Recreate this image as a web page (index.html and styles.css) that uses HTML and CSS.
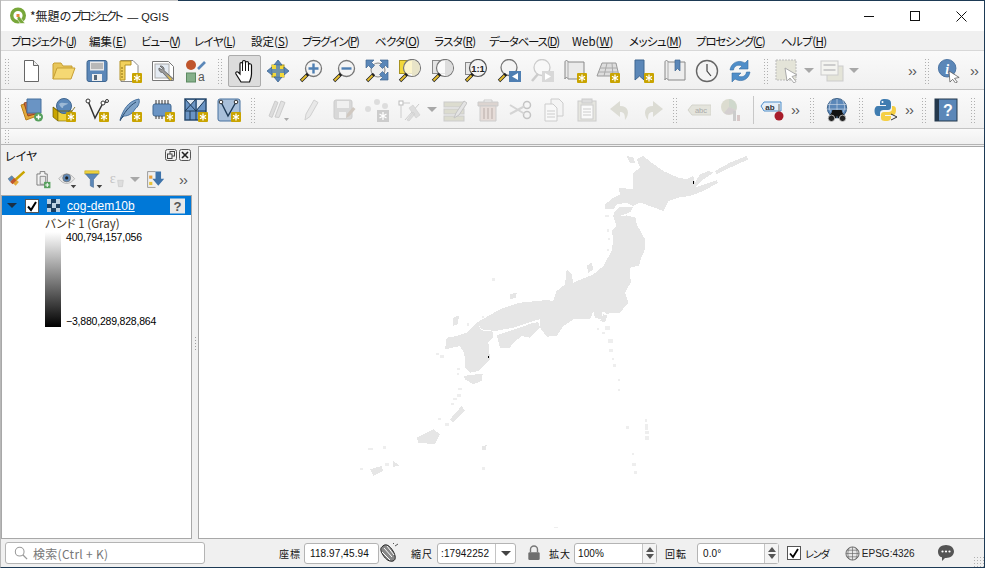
FILE: index.html
```html
<!DOCTYPE html>
<html lang="ja">
<head>
  <meta charset="UTF-8">
  <title>*無題のプロジェクト — QGIS</title>
  <link rel="stylesheet" href="styles.css">
</head>
<body>

<!-- icon sprite -->
<svg class="sprite" xmlns="http://www.w3.org/2000/svg">
  <symbol id="badge" viewBox="0 0 24 24">
    <rect x="14" y="14" width="10" height="10" rx="1" fill="#c9a400"/>
    <path d="M19 15.5v7M16 17.2l6 3.6M22 17.2l-6 3.6" stroke="#fff" stroke-width="1.3"/>
  </symbol>
  <symbol id="handle" viewBox="0 0 24 24">
    <path d="M9 15L2 22" stroke="#222" stroke-width="3.4"/>
    <path d="M7.5 16.5L2.5 21.5" stroke="#e8c030" stroke-width="1.8"/>
  </symbol>
  <symbol id="doc" viewBox="0 0 24 24">
    <path d="M5.5 1.5h9l5 5v16h-14z" fill="#fff" stroke="#666"/>
    <path d="M14.5 1.5v5h5" fill="#eee" stroke="#666"/>
  </symbol>
  <symbol id="folder" viewBox="0 0 24 24">
    <path d="M1 20V5l1-1h7l2 3h9v3" fill="#e8c65a" stroke="#c79f33"/>
    <path d="M1 20l4-11h18l-4 11z" fill="#f5d873" stroke="#c79f33"/>
  </symbol>
  <symbol id="save" viewBox="0 0 24 24">
    <rect x="2" y="1.5" width="20" height="21" rx="2" fill="#5b87b8" stroke="#3f6690"/>
    <rect x="5" y="2.5" width="14" height="9" fill="#e8e8e8"/>
    <path d="M6 5h12M6 7h12M6 9h12" stroke="#888"/>
    <rect x="7" y="15" width="10" height="7" fill="#eee"/><rect x="9" y="16" width="3" height="5" fill="#567"/>
  </symbol>
  <symbol id="layout" viewBox="0 0 24 24">
    <path d="M3 1.5h12l5 5v16H3z" fill="#fff" stroke="#888"/>
    <path d="M2 2h11v4H7v15H2z" fill="#f2d15c" stroke="#b59324"/>
    <path d="M3 9h2M3 12h2M3 15h2M3 18h2" stroke="#8a6f10"/>
    <use href="#badge"/>
  </symbol>
  <symbol id="manager" viewBox="0 0 24 24">
    <path d="M1.5 2.5h16l5 5v14h-21z" fill="#fff" stroke="#777"/>
    <rect x="4" y="5" width="14" height="14" fill="#e4ebf3" stroke="#aaa"/>
    <path d="M9 7a3.5 3.5 0 0 1 4 4.5l9 8-2.5 2.5-8-8.5A3.5 3.5 0 0 1 8 9l2.5 1.5 1-1z" fill="#9a9a9a" stroke="#555" stroke-width=".7"/>
    <path d="M15 15l6 5-1.5 1.5z" fill="#e2bd3e"/>
  </symbol>
  <symbol id="style" viewBox="0 0 24 24">
    <circle cx="7" cy="6" r="5" fill="#c0562d"/>
    <path d="M14 10l7-7" stroke="#5b87b8" stroke-width="2.6"/>
    <rect x="2.5" y="14" width="9" height="9" fill="#86b08a" stroke="#5d8a62"/>
    <text x="14" y="22" font-size="12" fill="#555" font-family="Liberation Sans">a</text>
  </symbol>
  <symbol id="pan" viewBox="0 0 24 24">
    <path d="M8 23l-5-8c-1-2 1-3 2.500-1.500L7 15V5c0-2 2.500-2 2.500 0V3c0-2 3-2 3 0v1c0-2 3-2 3 0v2c0-2 3-1.500 3 .5V15c0 3-1 5-2 8z" fill="#fff" stroke="#111" stroke-width="1.200"/>
    <path d="M9.500 5v7M12.500 4v8M15.500 5v7" stroke="#111"/>
  </symbol>
  <symbol id="panto" viewBox="0 0 24 24">
    <rect x="6" y="6" width="12" height="12" fill="#f2d83a" stroke="#a89320"/>
    <path d="M12 1l4 5h-8zM12 23l-4-5h8zM1 12l5-4v8zM23 12l-5 4V8z" fill="#5b87b8" stroke="#3f6690" stroke-width=".8"/>
    <path d="M10 6h4v12h-4zM6 10h12v4H6z" fill="#5b87b8" fill-opacity=".85"/>
    <path d="M6 6h4v4H6zM14 14h4v4h-4z" fill="#f2d83a"/>
  </symbol>
  <symbol id="zoomin" viewBox="0 0 24 24">
    <circle cx="14.500" cy="9.500" r="8" fill="#f4f4f4" stroke="#777" stroke-width="1.300"/>
    <path d="M9.500 9.500h10M14.500 4.500v10" stroke="#4f7fb2" stroke-width="2.400"/>
    <use href="#handle"/>
  </symbol>
  <symbol id="zoomout" viewBox="0 0 24 24">
    <circle cx="14.500" cy="9.500" r="8" fill="#f4f4f4" stroke="#777" stroke-width="1.300"/>
    <path d="M9.500 9.500h10" stroke="#4f7fb2" stroke-width="2.400"/>
    <use href="#handle"/>
  </symbol>
  <symbol id="zoomfull" viewBox="0 0 24 24">
    <circle cx="13" cy="11" r="7" fill="#eee" stroke="#888"/>
    <path d="M1 1h8l-2.500 2.500 3 3-3 3-3-3L1 9zM23 1v8l-2.500-2.500-3 3-3-3 3-3L15 1zM23 21h-8l2.500-2.500-3-3 3-3 3 3L23 13z" fill="#5b87b8" stroke="#3f6690" stroke-width=".7"/>
    <use href="#handle"/>
  </symbol>
  <symbol id="zoomsel" viewBox="0 0 24 24">
    <rect x="1.500" y="1.500" width="14" height="13" fill="#f2d83a" stroke="#a89320"/>
    <circle cx="14" cy="9" r="8.500" fill="#fff" fill-opacity=".75" stroke="#777" stroke-width="1.200"/>
    <path d="M14 1v16a8 8 0 0 0 0-16" fill="#e8e4c8"/>
    <use href="#handle"/>
  </symbol>
  <symbol id="zoomlayer" viewBox="0 0 24 24">
    <rect x="1.500" y="1.500" width="14" height="13" fill="#e4e4e4" stroke="#888"/>
    <circle cx="14" cy="9" r="8.500" fill="#fff" fill-opacity=".8" stroke="#777" stroke-width="1.200"/>
    <path d="M14 1v16a8 8 0 0 0 0-16" fill="#ddd"/>
    <use href="#handle"/>
  </symbol>
  <symbol id="zoom11" viewBox="0 0 24 24">
    <rect x="1.500" y="3.500" width="12" height="12" fill="#e8e8e8" stroke="#888"/>
    <circle cx="14" cy="9" r="8.500" fill="#f4f4f4" stroke="#555" stroke-width="1.200"/>
    <text x="14" y="12.500" font-size="9.500" font-weight="700" text-anchor="middle" fill="#222" font-family="Liberation Sans">1:1</text>
    <use href="#handle"/>
  </symbol>
  <symbol id="zoomlast" viewBox="0 0 24 24">
    <circle cx="12" cy="8.500" r="8" fill="#f4f4f4" stroke="#777" stroke-width="1.300"/>
    <use href="#handle"/>
    <rect x="12" y="12" width="12" height="11" fill="#4f7fb2"/>
    <path d="M21 14l-6 3.500 6 3.500z" fill="#fff"/>
  </symbol>
  <symbol id="zoomnext" viewBox="0 0 24 24">
    <circle cx="12" cy="8.500" r="8" fill="#f8f8f8" stroke="#ccc" stroke-width="1.300"/>
    <path d="M8 15l-6 7" stroke="#ccc" stroke-width="2.600"/>
    <rect x="12" y="12" width="12" height="11" fill="#d8d8d8"/>
    <path d="M15 14l6 3.500-6 3.500z" fill="#fff"/>
  </symbol>
  <symbol id="newmap" viewBox="0 0 24 24">
    <path d="M2 3c0-2 3-2 3 0h16v17H5c0-2-3-2-3 0z" fill="#eaeaea" stroke="#888"/>
    <path d="M5 3v17" stroke="#aaa"/>
    <use href="#badge"/>
  </symbol>
  <symbol id="map3d" viewBox="0 0 24 24">
    <path d="M6 4h14l3 13H1z" fill="#ddd" stroke="#999"/>
    <path d="M11 4L8 17M16 4l1 13M4 9h17M2 13h20" stroke="#aaa"/>
    <use href="#badge"/>
  </symbol>
  <symbol id="bookmark" viewBox="0 0 24 24">
    <path d="M5 1h9v20l-4.500-4L5 21z" fill="#5b87b8" stroke="#3f6690"/>
    <use href="#badge"/>
  </symbol>
  <symbol id="bookmarks" viewBox="0 0 24 24">
    <path d="M2 3c0-2 3-2 3 0h17v18H5c0-2-3-2-3 0z" fill="#eee" stroke="#888"/>
    <path d="M5 3v18" stroke="#aaa"/>
    <path d="M12 1h5v11l-2.500-2.500L12 12z" fill="#5b87b8" stroke="#3f6690" stroke-width=".7"/>
  </symbol>
  <symbol id="clock" viewBox="0 0 24 24">
    <circle cx="12" cy="12" r="10.500" fill="#f4f4f4" stroke="#666" stroke-width="1.400"/>
    <path d="M12 5v7l4 5" fill="none" stroke="#444" stroke-width="1.200"/>
  </symbol>
  <symbol id="refresh" viewBox="0 0 24 24">
    <path d="M2 11C3 4 10 0 17 4l3-3v9h-9l3-3C10 5 6 7 5.500 11z" fill="#4f8ec9" stroke="#3a6fa3" stroke-width=".6"/>
    <path d="M22 13c-1 7-8 11-15 7l-3 3v-9h9l-3 3c4 2 8 0 8.500-4z" fill="#4f8ec9" stroke="#3a6fa3" stroke-width=".6"/>
  </symbol>
  <symbol id="select" viewBox="0 0 24 24">
    <rect x="1" y="1" width="20" height="20" fill="#e4e4d8" stroke="#bbb" stroke-dasharray="2 1"/>
    <path d="M10 9l12 7-5 1.500 4 5-2 1.500-4-5-3 3z" fill="#fff" stroke="#aaa"/>
  </symbol>
  <symbol id="deselect" viewBox="0 0 24 24">
    <rect x="7" y="7" width="16" height="15" fill="#e4e4d8" stroke="#ccc"/>
    <rect x="1" y="2" width="17" height="14" fill="#f4f4f0" stroke="#ccc"/>
    <path d="M3.500 6h12M3.500 11h12" stroke="#ccc" stroke-width="2"/>
  </symbol>
  <symbol id="info" viewBox="0 0 26 26">
    <circle cx="11" cy="10" r="9.500" fill="#5b87b8" stroke="#46709e"/>
    <text x="11" y="16" font-size="15" font-style="italic" font-weight="700" text-anchor="middle" fill="#fff" font-family="Liberation Serif">i</text>
    <path d="M13 13l11 7-5 1 3 4-2 1-3-4-3 3z" fill="#fff" stroke="#555" stroke-width=".8"/>
  </symbol>
  <symbol id="addlayer" viewBox="0 0 24 24">
    <path d="M2 7l12-3 4 14-11 4z" fill="#e3a93a" stroke="#b8801c"/>
    <path d="M5 5l12-3 3 13-11 3z" fill="#c96a3c" stroke="#974a25"/>
    <path d="M8 1h14v14H8z" fill="#6a94c4" stroke="#46709e"/>
    <circle cx="19.500" cy="19" r="4.500" fill="#57a05d"/>
    <path d="M19.500 16.500v5M17 19h5" stroke="#fff" stroke-width="1.500"/>
  </symbol>
  <symbol id="gpkg" viewBox="0 0 24 24">
    <path d="M1 9l5 4v10l-5-4z" fill="#c9a400" stroke="#6b5a00" stroke-width=".7"/>
    <path d="M6 13h14v10H6z" fill="#efd23c" stroke="#8a7610" stroke-width=".7"/>
    <circle cx="12" cy="8" r="7.500" fill="#5b87b8" stroke="#3f6690"/>
    <path d="M7 6c3-3 6 0 9-1-1 3-5 1-5 5-2 0-3-2-4-4z" fill="#9db9d6"/>
    <path d="M1 9l5 4h14l3-4" fill="none" stroke="#6b5a00" stroke-width=".8"/>
    <use href="#badge"/>
  </symbol>
  <symbol id="vector" viewBox="0 0 24 24">
    <path d="M3 3l7 17 8-15" fill="none" stroke="#333" stroke-width="1.500"/>
    <path d="M18 5l4-1" stroke="#333"/>
    <circle cx="3" cy="3" r="2" fill="#fff" stroke="#333"/><circle cx="18" cy="5" r="2" fill="#fff" stroke="#333"/><circle cx="22" cy="3" r="1.500" fill="#fff" stroke="#333"/>
    <use href="#badge"/>
  </symbol>
  <symbol id="feather" viewBox="0 0 24 24">
    <path d="M2 22C5 12 10 3 21 1c1 4-1 8-4 10-2 4-6 7-11 7z" fill="#7fa3c8" stroke="#46709e"/>
    <path d="M2 23C6 15 11 8 18 4" fill="none" stroke="#2c4d70"/>
    <use href="#badge"/>
  </symbol>
  <symbol id="chip" viewBox="0 0 24 24">
    <rect x="2" y="6" width="18" height="12" rx="2" fill="#6a94c4" stroke="#3f6690"/>
    <path d="M5 2v4M8 2v4M11 2v4M14 2v4M17 2v4M5 18v3M8 18v3M11 18v3" stroke="#333"/>
    <use href="#badge"/>
  </symbol>
  <symbol id="mesh" viewBox="0 0 24 24">
    <rect x="1" y="1" width="21" height="21" fill="#6a94c4" stroke="#2c4d70" stroke-width="1.500"/>
    <path d="M2 2h9l-4.500 5zM13 2h8l-8 9z" fill="#dfe8f2"/>
    <path d="M1 13h21M12 1v21M1 1l11 12M12 13L22 1M1 13l11-12M6 13v9" stroke="#1e3a57" fill="none"/>
    <use href="#badge"/>
  </symbol>
  <symbol id="virtual" viewBox="0 0 24 24">
    <rect x="1" y="1" width="22" height="22" rx="2" fill="#a9c0da" stroke="#46709e"/>
    <path d="M4 4l7 14 8-14" fill="none" stroke="#1e3a57" stroke-width="1.400"/>
    <circle cx="4" cy="4" r="1.800" fill="#fff" stroke="#333"/><circle cx="19" cy="4" r="1.800" fill="#fff" stroke="#333"/>
    <use href="#badge"/>
  </symbol>
  <symbol id="pencils" viewBox="0 0 24 24">
    <path d="M3 18L9 3l3 1.500-6 15z" fill="#ddd" stroke="#ccc"/>
    <path d="M9 19L15 3l4 1.500-6 15z" fill="#e2e2e2" stroke="#ccc"/>
    <path d="M18 20h5l-2.500 3z" fill="#aaa"/>
  </symbol>
  <symbol id="pencil" viewBox="0 0 24 24">
    <path d="M6 22l1-6L15 2l4 2.500-8 14z" fill="#e8e8e8" stroke="#d0d0d0"/>
  </symbol>
  <symbol id="saveedit" viewBox="0 0 24 24">
    <rect x="2" y="2" width="18" height="19" rx="2" fill="#d8d8d8" stroke="#ccc"/>
    <rect x="5" y="3" width="12" height="7" fill="#f0f0f0"/>
    <rect x="7" y="14" width="7" height="6" fill="#f0f0f0"/>
    <path d="M14 20l1-4 6-7 2.500 2-6 7z" fill="#d0c8c0"/>
  </symbol>
  <symbol id="points" viewBox="0 0 24 24">
    <circle cx="12" cy="4" r="3" fill="#ddd"/><circle cx="20" cy="8" r="3" fill="#ddd"/><circle cx="3" cy="11" r="3" fill="#ddd"/>
    <rect x="12" y="12" width="12" height="12" fill="#ccc"/>
    <path d="M18 14v8M14.500 16l7 4M21.500 16l-7 4" stroke="#fff" stroke-width="1.300"/>
  </symbol>
  <symbol id="vertex" viewBox="0 0 24 24">
    <rect x="1" y="3" width="4" height="4" fill="#fff" stroke="#bbb"/>
    <path d="M5 5h7M3 7v13M7 22L21 6" stroke="#ccc" fill="none"/>
    <path d="M11 10l4-3 7 10-4 3zM9 22l6-8 2 2-6 7z" fill="#ddd" stroke="#ccc" stroke-width=".6"/>
  </symbol>
  <symbol id="multi" viewBox="0 0 24 24">
    <rect x="1" y="4" width="20" height="5" fill="#dcdccf" stroke="#ccc"/>
    <rect x="1" y="11" width="20" height="5" fill="#dcdccf" stroke="#ccc"/>
    <rect x="1" y="18" width="20" height="5" fill="#dcdccf" stroke="#ccc"/>
    <path d="M11 20l2-5 8-12 3 2-8 12z" fill="#e4e4e4" stroke="#c4c4c4"/>
  </symbol>
  <symbol id="trash" viewBox="0 0 24 24">
    <path d="M2 4h20v4H2z" fill="#dcd4d0" stroke="#ccc"/>
    <path d="M8 4V2h8v2" fill="none" stroke="#ccc"/>
    <path d="M4 8h16v15H4z" fill="#e6dcd8" stroke="#ccc"/>
    <path d="M8 10v11M12 10v11M16 10v11" stroke="#c8bcb8" stroke-width="1.500"/>
  </symbol>
  <symbol id="scissors" viewBox="0 0 24 24">
    <circle cx="18" cy="7" r="3.500" fill="none" stroke="#c4c4c4" stroke-width="1.500"/>
    <circle cx="18" cy="17" r="3.500" fill="none" stroke="#c4c4c4" stroke-width="1.500"/>
    <path d="M15 8.500L1 16M15 15.500L1 7" stroke="#d4d4d4" stroke-width="2"/>
  </symbol>
  <symbol id="copy" viewBox="0 0 24 24">
    <path d="M9 1h8l4 4v13H9z" fill="#f4f4f4" stroke="#ccc"/>
    <path d="M3 6h8l4 4v13H3z" fill="#f8f8f8" stroke="#ccc"/>
    <path d="M5 13h8M5 16h8M5 19h8" stroke="#ccc"/>
  </symbol>
  <symbol id="paste" viewBox="0 0 24 24">
    <rect x="3" y="3" width="18" height="20" fill="#e6e6e0" stroke="#ccc"/>
    <rect x="7" y="1" width="10" height="4" fill="#ddd" stroke="#ccc"/>
    <rect x="6" y="7" width="12" height="14" fill="#fafafa" stroke="#ccc"/>
    <path d="M8 11h8M8 14h8M8 17h8" stroke="#ccc"/>
  </symbol>
  <symbol id="undo" viewBox="0 0 24 24">
    <path d="M12 3L2 11l10 8v-5c4 0 5 2 5 8 5-6 4-14-5-14z" fill="#dcdcd4"/>
  </symbol>
  <symbol id="redo" viewBox="0 0 24 24">
    <path d="M12 3l10 8-10 8v-5c-4 0-5 2-5 8-5-6-4-14 5-14z" fill="#dcdcd4"/>
  </symbol>
  <symbol id="abc" viewBox="0 0 24 24">
    <path d="M1 12l4-5h19v10H5z" fill="#e4e4dc" stroke="#d4d4cc"/>
    <text x="14" y="15" font-size="7.500" text-anchor="middle" fill="#aaa" font-family="Liberation Sans">abc</text>
  </symbol>
  <symbol id="diagram" viewBox="0 0 24 24">
    <circle cx="9" cy="9" r="8" fill="#dcdcd0"/>
    <path d="M9 9V1a8 8 0 0 1 7 11z" fill="#cfd8cc"/><path d="M9 9l7 3a8 8 0 0 1-12 3z" fill="#d4cfd0"/>
    <rect x="13" y="13" width="3" height="10" fill="#cccccc"/><rect x="17" y="17" width="3" height="6" fill="#d8c8c8"/>
  </symbol>
  <symbol id="labelpin" viewBox="0 0 24 24">
    <path d="M1 8l3-4h17v9H4z" fill="#e4eef8" stroke="#4f8ec9"/>
    <text x="10" y="11.500" font-size="8" font-weight="700" text-anchor="middle" fill="#333" font-family="Liberation Sans">ab</text>
    <path d="M19 6v10" stroke="#999" stroke-width="1.500"/>
    <circle cx="19" cy="18" r="4.500" fill="#a81c2a"/>
  </symbol>
  <symbol id="globefind" viewBox="0 0 26 26">
    <circle cx="13" cy="11" r="10.500" fill="#5b87b8" stroke="#33587f"/>
    <path d="M3 7h20M2 12h22M13 1v14M7 2c-3 6-3 10 0 14M19 2c3 6 3 10 0 14" fill="none" stroke="#cfdcea" stroke-width=".7"/>
    <path d="M8 13h10l1 3 4 6H14l-1-3-1 3H3l4-6z" fill="#111"/>
    <circle cx="7" cy="22" r="3.500" fill="#222" stroke="#ddd" stroke-width=".8"/><circle cx="19" cy="22" r="3.500" fill="#222" stroke="#ddd" stroke-width=".8"/>
  </symbol>
  <symbol id="python" viewBox="0 0 24 24">
    <path d="M11 1c-4 0-5 1.500-5 4v2h6v1H4c-2.500 0-3.500 2-3.500 5s1.500 5 3.500 5h2v-3c0-2 1.500-3 3.500-3h4.500c2 0 3-1 3-3V5c0-2.500-2-4-6-4z" fill="#3f7cb0"/>
    <circle cx="8.500" cy="4" r="1" fill="#fff"/>
    <path d="M12 23c4 0 5-1.500 5-4v-1h-6v-1h8c2 0 3-2 3-5s-1-4-3-4h-1v3c0 2-1.500 3-3.500 3H10c-2 0-3 1-3 3v2.500c0 2.500 1 3.500 5 3.500z" fill="#f5cf45"/>
    <path d="M17 16l6 3-6 3" fill="none" stroke="#333"/>
  </symbol>
  <symbol id="helpbook" viewBox="0 0 24 24">
    <rect x="1" y="1" width="22" height="22" fill="#5b87b8" stroke="#24384d"/>
    <rect x="1" y="1" width="4" height="22" fill="#24384d"/>
    <text x="14" y="18" font-size="16" font-weight="700" text-anchor="middle" fill="#fff" font-family="Liberation Sans">?</text>
  </symbol>
  <symbol id="broom" viewBox="0 0 24 24">
    <path d="M22 2L11 12" stroke="#c9a400" stroke-width="3"/>
    <path d="M1 11l5-4 9 8-4 5z" fill="#e3a93a"/>
    <path d="M1 11l5-4 3 3-5 5z" fill="#5b87b8"/>
    <path d="M4 15l5-5 3 3-5 5z" fill="#c0562d"/>
  </symbol>
  <symbol id="addgroup" viewBox="0 0 24 24">
    <path d="M9 2h6v3h3v14H5V5h4z" fill="#f4f4f4" stroke="#666"/>
    <path d="M9 8h7v10H9z" fill="#e8e8e8" stroke="#777"/>
    <rect x="14" y="15" width="8" height="8" fill="#57a05d"/>
    <path d="M18 16.500v5M15.500 19h5" stroke="#fff" stroke-width="1.300"/>
  </symbol>
  <symbol id="eye" viewBox="0 0 24 24">
    <path d="M1 11c6-8 14-8 20 0-6 8-14 8-20 0z" fill="#e8e8e8" stroke="#aaa"/>
    <circle cx="11" cy="10" r="5" fill="#5b87b8" stroke="#777"/><circle cx="11" cy="10" r="2" fill="#222"/>
    <path d="M16 19h7l-3.500 4z" fill="#444"/>
  </symbol>
  <symbol id="filter" viewBox="0 0 24 24">
    <path d="M1 1h18v4H1z" fill="#efd23c" stroke="#b8a020" stroke-width=".7"/>
    <path d="M2 5h16l-6 7v10l-4-2v-8z" fill="#5b87b8" stroke="#3f6690" stroke-width=".7"/>
    <path d="M16 19h7l-3.500 4z" fill="#444"/>
  </symbol>
  <symbol id="epsilon" viewBox="0 0 24 24">
    <text x="1" y="16" font-size="18" fill="#c4c4c4" font-family="Liberation Serif">ε</text>
    <path d="M11 13h7l-1 8h-5z" fill="#ddd" stroke="#ccc"/>
  </symbol>
  <symbol id="expand" viewBox="0 0 24 24">
    <path d="M2 2h10M2 2v20M2 22h10" fill="none" stroke="#888"/>
    <rect x="4" y="7" width="4" height="4" fill="#e8a03a"/><rect x="4" y="15" width="4" height="4" fill="#e8c33a"/>
    <path d="M12 2h7v9h4l-7.500 9L8 11h4z" fill="#3f74ab"/>
  </symbol>
  <symbol id="question" viewBox="0 0 16 16">
    <rect width="16" height="16" fill="#e9e9e9"/>
    <text x="8" y="13" font-size="14" font-weight="700" text-anchor="middle" fill="#555" font-family="Liberation Sans">?</text>
  </symbol>
  <symbol id="mouse" viewBox="0 0 20 20">
    <path d="M3 3c3-3 7 0 10 5s3 9 0 10-7-1-10-6-3-7 0-9z" fill="#888" stroke="#222"/>
    <path d="M4 5l8 9M7 3l7 9M2 9l8 8" stroke="#fff"/>
    <path d="M15 3l3-2M13 1l1-1" stroke="#555"/>
  </symbol>
  <symbol id="lock" viewBox="0 0 16 18">
    <path d="M4 8V5a4 4 0 0 1 8 0v3" fill="none" stroke="#777" stroke-width="1.600"/>
    <rect x="1.500" y="8" width="13" height="9" rx="1.500" fill="#6f6f6f"/>
  </symbol>
  <symbol id="globe" viewBox="0 0 16 16">
    <circle cx="8" cy="8" r="7" fill="#e6e6e6" stroke="#666"/>
    <path d="M1 8h14M2 4.500h12M2 11.500h12M8 1v14M4.500 2c-2 4-2 8 0 12M11.500 2c2 4 2 8 0 12" fill="none" stroke="#666" stroke-width=".7"/>
  </symbol>
  <symbol id="chat" viewBox="0 0 18 18">
    <path d="M9 1c4.500 0 8 2.800 8 6.500S13.500 14 9 14l-1 0-3 3v-3.800C2.500 13 1 10.500 1 7.500 1 3.800 4.500 1 9 1z" fill="#555"/>
    <circle cx="5.500" cy="7.500" r="1.100" fill="#fff"/><circle cx="9" cy="7.500" r="1.100" fill="#fff"/><circle cx="12.500" cy="7.500" r="1.100" fill="#fff"/>
  </symbol>
  <symbol id="search" viewBox="0 0 16 16">
    <circle cx="6.500" cy="6.500" r="5" fill="none" stroke="#999" stroke-width="1.200"/>
    <path d="M10 10l5 5" stroke="#999" stroke-width="1.500"/>
  </symbol>
  <symbol id="qgis" viewBox="0 0 18 18">
    <circle cx="9" cy="8.500" r="6.300" fill="none" stroke="#78a73a" stroke-width="3.400"/>
    <path d="M9 8l2 2 5 6.500h-4.500L8 12z" fill="#78a73a" stroke="#fff" stroke-width=".6"/>
    <path d="M7.500 7h3v3h-3z" fill="#e6893a"/>
  </symbol>
</svg>

<div class="window">

  <!-- title bar -->
  <div class="titlebar">
    <svg class="qgis"><use href="#qgis"/></svg>
    <span class="title">*無題の<span class="tk">プロジェクト</span><span class="tl"> — QGIS</span></span>
    <div class="wincontrols">
      <span class="wc"><i class="wc-min"></i></span>
      <span class="wc"><i class="wc-max"></i></span>
      <span class="wc">
        <svg class="wc-close" viewBox="0 0 11 11"><path d="M.5.500l10 10M10.500.5l-10 10" stroke="#111" fill="none"/></svg>
      </span>
    </div>
  </div>

  <!-- menu -->
  <div class="menubar">
    <span class="m m1 k1">プロジェクト(<u>J</u>)</span>
    <span class="m m2">編集(<u>E</u>)</span>
    <span class="m m3 k1">ビュー(<u>V</u>)</span>
    <span class="m m4 k2">レイヤ(<u>L</u>)</span>
    <span class="m m5">設定(<u>S</u>)</span>
    <span class="m m6 k1">プラグイン(<u>P</u>)</span>
    <span class="m m7 k2">ベクタ(<u>O</u>)</span>
    <span class="m m8 k2">ラスタ(<u>R</u>)</span>
    <span class="m m9 k1">データベース(<u>D</u>)</span>
    <span class="m m10">Web(<u>W</u>)</span>
    <span class="m m11 k2">メッシュ(<u>M</u>)</span>
    <span class="m m12 k1">プロセシング(<u>C</u>)</span>
    <span class="m k2">ヘルプ(<u>H</u>)</span>
  </div>

  <!-- toolbar 1 -->
  <div class="toolbar">
    <i class="hd"></i>
    <span class="tb"><svg class="ic"><use href="#doc"/></svg></span>
    <span class="tb"><svg class="ic"><use href="#folder"/></svg></span>
    <span class="tb"><svg class="ic"><use href="#save"/></svg></span>
    <span class="tb"><svg class="ic"><use href="#layout"/></svg></span>
    <span class="tb"><svg class="ic"><use href="#manager"/></svg></span>
    <span class="tb"><svg class="ic"><use href="#style"/></svg></span>
    <i class="hd hd16"></i>
    <span class="tb on"><svg class="ic"><use href="#pan"/></svg></span>
    <span class="tb"><svg class="ic"><use href="#panto"/></svg></span>
    <span class="tb"><svg class="ic"><use href="#zoomin"/></svg></span>
    <span class="tb"><svg class="ic"><use href="#zoomout"/></svg></span>
    <span class="tb"><svg class="ic"><use href="#zoomfull"/></svg></span>
    <span class="tb"><svg class="ic"><use href="#zoomsel"/></svg></span>
    <span class="tb"><svg class="ic"><use href="#zoomlayer"/></svg></span>
    <span class="tb"><svg class="ic"><use href="#zoom11"/></svg></span>
    <span class="tb"><svg class="ic"><use href="#zoomlast"/></svg></span>
    <span class="tb"><svg class="ic"><use href="#zoomnext"/></svg></span>
    <span class="tb"><svg class="ic"><use href="#newmap"/></svg></span>
    <span class="tb"><svg class="ic"><use href="#map3d"/></svg></span>
    <span class="tb tb36"><svg class="ic"><use href="#bookmark"/></svg></span>
    <span class="tb tb30"><svg class="ic"><use href="#bookmarks"/></svg></span>
    <span class="tb"><svg class="ic"><use href="#clock"/></svg></span>
    <span class="tb"><svg class="ic"><use href="#refresh"/></svg></span>
    <i class="hd hd12"></i>
    <span class="tb"><svg class="ic"><use href="#select"/></svg></span>
    <i class="drop"></i>
    <span class="tb"><svg class="ic"><use href="#deselect"/></svg></span>
    <i class="drop"></i>
    <span class="more push">››</span>
    <i class="hd hd16"></i>
    <span class="tb tb28"><svg class="ic"><use href="#info"/></svg></span>
    <span class="more end">››</span>
  </div>

  <!-- toolbar 2 -->
  <div class="toolbar">
    <i class="hd"></i>
    <span class="tb"><svg class="ic"><use href="#addlayer"/></svg></span>
    <span class="tb"><svg class="ic"><use href="#gpkg"/></svg></span>
    <span class="tb"><svg class="ic"><use href="#vector"/></svg></span>
    <span class="tb"><svg class="ic"><use href="#feather"/></svg></span>
    <span class="tb"><svg class="ic"><use href="#chip"/></svg></span>
    <span class="tb"><svg class="ic"><use href="#mesh"/></svg></span>
    <span class="tb"><svg class="ic"><use href="#virtual"/></svg></span>
    <i class="hd hd16"></i>
    <span class="tb"><svg class="ic"><use href="#pencils"/></svg></span>
    <span class="tb"><svg class="ic"><use href="#pencil"/></svg></span>
    <span class="tb"><svg class="ic"><use href="#saveedit"/></svg></span>
    <span class="tb"><svg class="ic"><use href="#points"/></svg></span>
    <span class="tb"><svg class="ic"><use href="#vertex"/></svg></span>
    <i class="drop"></i>
    <span class="tb"><svg class="ic"><use href="#multi"/></svg></span>
    <span class="tb"><svg class="ic"><use href="#trash"/></svg></span>
    <span class="tb"><svg class="ic"><use href="#scissors"/></svg></span>
    <span class="tb"><svg class="ic"><use href="#copy"/></svg></span>
    <span class="tb"><svg class="ic"><use href="#paste"/></svg></span>
    <span class="tb"><svg class="ic"><use href="#undo"/></svg></span>
    <span class="tb"><svg class="ic"><use href="#redo"/></svg></span>
    <i class="hd"></i>
    <span class="tb"><svg class="ic"><use href="#abc"/></svg></span>
    <span class="tb"><svg class="ic"><use href="#diagram"/></svg></span>
    <i class="vsep"></i>
    <span class="tb tb28"><svg class="ic"><use href="#labelpin"/></svg></span>
    <span class="more more18">››</span>
    <i class="hd hd16"></i>
    <span class="tb"><svg class="ic"><use href="#globefind"/></svg></span>
    <i class="hd hd16"></i>
    <span class="tb"><svg class="ic"><use href="#python"/></svg></span>
    <span class="more">››</span>
    <i class="hd hd16"></i>
    <span class="tb tb28"><svg class="ic"><use href="#helpbook"/></svg></span>
    <i class="hd hd24"></i>
  </div>

  <!-- empty toolbar -->
  <div class="toolbar toolbar-empty"><i class="hd hd-short"></i></div>

  <div class="main">

    <!-- layers panel -->
    <div class="panel">
      <div class="dockhead">
        <span>レイヤ</span>
        <span class="dockbtn">
          <svg viewBox="0 0 12 12"><rect x=".5" y=".5" width="11" height="11" rx="2" fill="none" stroke="#555"/><rect x="5" y="2.500" width="4.500" height="4.500" fill="none" stroke="#444"/><rect x="2.500" y="5" width="4.500" height="4.500" fill="#eee" stroke="#444"/></svg>
        </span>
        <span class="dockbtn">
          <svg viewBox="0 0 12 12"><rect x=".5" y=".5" width="11" height="11" rx="2" fill="none" stroke="#555"/><path d="M3 3l6 6M9 3l-6 6" stroke="#222" stroke-width="1.600"/></svg>
        </span>
      </div>
      <div class="docktools">
        <span class="dt"><svg class="ic20"><use href="#broom"/></svg></span>
        <span class="dt"><svg class="ic20"><use href="#addgroup"/></svg></span>
        <span class="dt"><svg class="ic20"><use href="#eye"/></svg></span>
        <span class="dt"><svg class="ic20"><use href="#filter"/></svg></span>
        <span class="dt"><svg class="ic20"><use href="#epsilon"/></svg></span>
        <i class="drop drop-small"></i>
        <span class="dt"><svg class="ic20"><use href="#expand"/></svg></span>
        <span class="more push">››</span>
      </div>
      <div class="tree">
        <div class="layerrow">
          <i class="twisty"></i>
          <span class="check">
            <svg viewBox="0 0 12 12"><path d="M2 6.500l3 3.500 5-8" fill="none" stroke="#000" stroke-width="2"/></svg>
          </span>
          <span class="checker"></span>
          <span class="layername">cog-dem10b</span>
          <svg class="qmark"><use href="#question"/></svg>
        </div>
        <div class="band">バンド 1 (Gray)</div>
        <div class="legend">
          <div class="ramp"></div>
          <div class="labels">
            <span>400,794,157,056</span>
            <span>−3,880,289,828,864</span>
          </div>
        </div>
      </div>
    </div>

    <div class="splitter"><i></i></div>

    <!-- map canvas -->
    <div class="canvas">
      <svg class="map" viewBox="-453 3 2355 1173" shape-rendering="crispEdges">
        <path class="land" d="M860 40L880 30 905 50 940 75 985 95 1010 100 1030 90 1035 110 1050 85 1075 75 1090 80 1060 100 1035 125 1100 103 1105 110 1060 135 1020 150 985 155 955 165 940 195 900 180 870 170 850 180 830 170 800 175 790 190 765 190 765 175 790 155 810 145 805 125 850 130 850 80 870 65z"/>
        <path class="land" d="M1095 75L1140 50 1190 30 1195 40 1140 65 1100 85zM830 30L850 35 855 50 840 50zM850 80L865 80 860 90 850 90z"/>
        <path class="land" d="M790 210L795 195 810 182 850 182 842 198 805 212 830 208 858 215 860 235 885 280 885 310 870 345 868 358 840 365 842 410 825 440 835 470 810 500 770 503 758 495 755 520 735 515 730 495 720 520 670 520 640 540 620 570 590 572 570 545 570 520 550 525 490 545 435 555 395 550 380 530 450 490 510 470 590 462 610 465 620 435 645 415 650 370 665 385 670 410 730 385 760 360 785 315 790 280 785 255 800 240z"/>
        <path class="land" d="M440 568L495 550 545 532 565 528 570 545 540 575 515 570 490 590 480 605 450 605z"/>
        <path class="land" d="M350 560L380 530 395 553 430 557 430 572 415 590 420 640 400 660 385 675 360 680 345 665 345 640 342 620 330 600 285 610 290 575 320 570z"/>
        <path class="land" d="M710 360L725 350 730 370 715 380zM480 445L500 440 498 455 480 460zM310 515L328 508 322 535 308 540zM340 690L380 685 398 685 395 705 370 715 345 700zM300 820L335 780 345 795 310 830zM200 875L250 850 270 865 255 895 205 890zM60 970L95 960 100 975 70 990zM130 945L150 960 130 962zM395 900L410 898 408 912 398 914zM760 505L772 508 765 530 750 525z"/>
        <path class="dots" d="M425 396h10v8h-10zM258 622h10v6h-10zM270 628h12v8h-12zM320 665h10v8h-10zM320 680h8v6h-8zM325 725h10v8h-10zM320 745h14v8h-14zM308 755h14v8h-14zM303 770h8v8h-8zM285 830h12v10h-12zM265 815h8v6h-8zM55 905h15v8h-15zM100 900h8v8h-8zM30 965h10v8h-10zM105 952h12v8h-12zM396 964h10v8h-10zM765 540h14v12h-14zM740 545h8v8h-8zM755 558h10v6h-10zM775 580h14v10h-14zM778 610h12v8h-12zM786 636h6v6h-6zM788 655h10v8h-10zM804 700h6v6h-6zM804 730h6v6h-6zM884 820h8v8h-8zM886 835h8v16h-8zM886 855h10v8h-10zM886 870h10v12h-10zM828 840h8v8h-8zM846 922h6v6h-6zM846 950h12v10h-12zM852 975h8v8h-8zM612 1143h12v4h-12zM765 208h12v6h-12zM770 250h6v8h-6zM775 275h6v6h-6zM770 310h8v6h-8zM395 510h6v6h-6zM350 532h8v8h-8z"/>
        <rect class="px" x="1029" y="106" width="3" height="7"/>
        <rect class="px" x="414" y="629" width="3" height="6"/>
      </svg>
    </div>
  </div>

  <!-- status bar -->
  <div class="statusbar">
    <div class="searchbox">
      <svg class="search-ic"><use href="#search"/></svg>
      <span>検索(Ctrl + K)</span>
    </div>
    <span class="lbl lbl-coord">座標</span>
    <span class="field f-coord">118.97,45.94</span>
    <svg class="mouse"><use href="#mouse"/></svg>
    <span class="lbl lbl-scale">縮尺</span>
    <div class="field f-scale">
      <span class="fval">:17942252</span>
      <span class="dropbtn"><i class="drop drop-dark"></i></span>
    </div>
    <svg class="lock"><use href="#lock"/></svg>
    <span class="lbl lbl-mag">拡大</span>
    <div class="field f-spin f-mag">
      <span class="fval">100%</span>
      <span class="spin"><i class="up"></i><i class="down"></i></span>
    </div>
    <span class="lbl lbl-rot">回転</span>
    <div class="field f-spin f-rot">
      <span class="fval">0.0°</span>
      <span class="spin"><i class="up"></i><i class="down"></i></span>
    </div>
    <span class="rcheck">
      <svg viewBox="0 0 12 12"><path d="M2 6.500l3 3.500 5-8" fill="none" stroke="#000" stroke-width="1.800"/></svg>
    </span>
    <span class="lbl lbl-render">レンダ</span>
    <svg class="globe"><use href="#globe"/></svg>
    <span class="epsg">EPSG:4326</span>
    <svg class="chat"><use href="#chat"/></svg>
    <i class="grip"></i>
  </div>
</div>

</body>
</html>
```

FILE: styles.css
```css
* {
  margin: 0;
  padding: 0;
  box-sizing: border-box;
}

body {
  width: 985px;
  height: 568px;
  overflow: hidden;
  font-family: "Noto Sans CJK JP", "Noto Sans", sans-serif;
  font-size: 12px;
  color: #111;
  font-feature-settings: "palt" 1;
  background: #f0f0f0;
}

i {
  display: block;
  font-style: normal;
}

.sprite {
  display: none;
}

/* top edge is grey on the left, dark on the right */
.window {
  width: 985px;
  height: 568px;
  display: flex;
  flex-direction: column;
  padding-top: 1px;
  border-right: 1px solid #1d3a55;
  border-bottom: 1px solid #1d3a55;
  border-left: 1px solid #b8b8b8;
  background: linear-gradient(90deg, #c8c8c8 177px, #1d3a55 177px) 0 0 / 100% 1px no-repeat;
}

/* title bar */
.titlebar {
  height: 30px;
  flex: none;
  background: #fff;
  display: flex;
  align-items: center;
  padding-left: 8px;
}

.qgis {
  width: 18px;
  height: 18px;
  margin-right: 3px;
}

.title {
  font-size: 12px;
  line-height: 30px;
  color: #222;
}

.tk {
  letter-spacing: -2.400px;
}

.tl {
  font-family: "Liberation Sans", sans-serif;
  font-size: 11px;
  margin-left: 3px;
}

.wincontrols {
  margin-left: auto;
  display: flex;
}

.wc {
  width: 46px;
  height: 30px;
  display: flex;
  align-items: center;
  justify-content: center;
}

.wc-min {
  width: 10px;
  height: 1px;
  background: #111;
}

.wc-max {
  width: 10px;
  height: 10px;
  border: 1px solid #111;
}

.wc-close {
  width: 11px;
  height: 11px;
}

/* menu */
.menubar {
  height: 20px;
  flex: none;
  background: #f0f0f0;
  display: flex;
  align-items: center;
  padding-left: 10px;
  font-size: 11.500px;
  color: #111;
  border-bottom: 1px solid #d8d8d8;
  white-space: nowrap;
}

.m {
  flex: none;
}

.k1 { letter-spacing: -1.200px; }
.k2 { letter-spacing: -.6px; }

.m1 { width: 78px; }
.m2 { width: 52px; }
.m3 { width: 53px; }
.m4 { width: 57px; }
.m5 { width: 51px; }
.m6 { width: 73px; }
.m7 { width: 59px; }
.m8 { width: 55px; }
.m9 { width: 83px; }
.m10 { width: 57px; }
.m11 { width: 67px; }
.m12 { width: 85px; }

/* toolbars */
.toolbar {
  height: 39px;
  flex: none;
  display: flex;
  align-items: center;
  background: linear-gradient(#fafafa, #f0f0f0);
  border-bottom: 1px solid #c4c4c4;
  padding-top: 1px;
}

.toolbar-empty {
  height: 16px;
  padding: 0;
  border-bottom-color: #b4b4b4;
}

.tb {
  width: 33px;
  height: 32px;
  flex: none;
  display: flex;
  align-items: center;
  justify-content: center;
}

.tb36 { width: 36px; }
.tb30 { width: 30px; }
.tb28 { width: 28px; }

.tb.on {
  background: #dcdcdc;
  border: 1px solid #ababab;
  border-radius: 2px;
}

.ic {
  width: 24px;
  height: 24px;
  display: block;
}

.hd {
  width: 13px;
  height: 26px;
  flex: none;
  background-image: radial-gradient(circle, #b0b0b0 .7px, transparent .9px), radial-gradient(circle, #b0b0b0 .7px, transparent .9px);
  background-size: 3px 3px;
  background-repeat: repeat-y;
  background-position: 3px 0, 6px 0;
}

.hd16 {
  width: 16px;
  background-position: 5px 0, 8px 0;
}

.hd12 {
  width: 14px;
  background-position: 7px 0, 10px 0;
}

.hd24 {
  width: 24px;
  background-position: 10px 0, 13px 0;
}

.hd-short {
  height: 15px;
}

.vsep {
  width: 10px;
  height: 28px;
  flex: none;
  background: linear-gradient(#c8c8c8, #c8c8c8) center / 1px 100% no-repeat;
}

.drop {
  width: 0;
  height: 0;
  margin: 0 1px;
  flex: none;
  border-left: 5px solid transparent;
  border-right: 5px solid transparent;
  border-top: 5px solid #a8a8a8;
}

.drop-small {
  margin: 0 3px 0 -2px;
}

.drop-dark {
  border-top-color: #444;
}

.more {
  width: 14px;
  flex: none;
  font-family: "Liberation Sans", sans-serif;
  font-size: 15px;
  line-height: 18px;
  text-align: center;
  color: #555;
  letter-spacing: -1px;
}

.more18 {
  width: 18px;
}

.push {
  margin-left: auto;
}

.end {
  margin: 0 3px 0 4px;
}

/* main area */
.main {
  flex: 1;
  min-height: 0;
  display: flex;
  padding-top: 1px;
  background: #f0f0f0;
}

.panel {
  width: 191px;
  flex: none;
  display: flex;
  flex-direction: column;
}

.dockhead {
  height: 20px;
  flex: none;
  display: flex;
  align-items: center;
  padding: 0 1px 2px 4px;
  gap: 2px;
  font-size: 12px;
}

.dockhead span:first-child {
  margin-right: auto;
}

.dockbtn {
  width: 12px;
  height: 12px;
  display: block;
}

.dockbtn svg {
  display: block;
}

.docktools {
  height: 29px;
  flex: none;
  display: flex;
  align-items: center;
  padding: 0 1px 2px 3px;
}

.docktools .push {
  margin-right: 1px;
}

.dt {
  width: 25.500px;
  height: 24px;
  flex: none;
  display: flex;
  align-items: center;
  justify-content: center;
}

.ic20 {
  width: 19px;
  height: 19px;
  display: block;
}

.tree {
  flex: 1;
  min-height: 0;
  background: #fff;
  border: 1px solid #a8a8a8;
}

.layerrow {
  height: 19px;
  background: #0078d7;
  display: flex;
  align-items: center;
}

.twisty {
  width: 0;
  height: 0;
  margin-left: 5px;
  border-left: 5px solid transparent;
  border-right: 5px solid transparent;
  border-top: 5px solid #1a2f45;
}

.check {
  width: 14px;
  height: 14px;
  margin-left: 8px;
  background: #fff;
  border: 1px solid #555;
  display: block;
}

.check svg {
  display: block;
}

.checker {
  width: 13px;
  height: 13px;
  margin-left: 8px;
  background: conic-gradient(#1c3f62 25%, #bcd0e2 0 50%, #1c3f62 0 75%, #bcd0e2 0) 0 0 / 9px 9px;
}

.layername {
  margin-left: 7px;
  font-family: "Liberation Sans", sans-serif;
  font-size: 12px;
  letter-spacing: .1px;
  color: #fff;
  text-decoration: underline;
}

.qmark {
  width: 15px;
  height: 16px;
  margin-left: auto;
  margin-right: 6px;
}

.band {
  height: 17px;
  padding-left: 43px;
  font-size: 11.500px;
  line-height: 16px;
  color: #3b3020;
}

.legend {
  display: flex;
  padding-left: 43px;
  height: 95px;
}

.ramp {
  width: 16px;
  height: 95px;
  background: linear-gradient(#fff, #000);
}

.labels {
  display: flex;
  flex-direction: column;
  justify-content: space-between;
  margin-left: 5px;
  font-family: "Liberation Sans", sans-serif;
  font-size: 10.500px;
  letter-spacing: -.2px;
  line-height: 11px;
  color: #000;
  white-space: nowrap;
}

.splitter {
  width: 6px;
  flex: none;
  display: flex;
  align-items: center;
  justify-content: center;
}

.splitter i {
  width: 3px;
  height: 14px;
  background: radial-gradient(circle, #a0a0a0 .7px, transparent .9px) 0 0 / 3px 3px;
}

.canvas {
  flex: 1;
  min-width: 0;
  background: #fff;
  border: 1px solid #a8a8a8;
  border-right: none;
}

.map {
  width: 100%;
  height: 100%;
  display: block;
}

.land {
  fill: #e6e6e6;
}

.dots {
  fill: #eeeeee;
}

.px {
  fill: #000;
}

/* status bar */
.statusbar {
  height: 28px;
  flex: none;
  background: #f0f0f0;
  display: flex;
  align-items: center;
  padding-left: 4px;
  position: relative;
  font-size: 10px;
}

.searchbox {
  width: 200px;
  height: 22px;
  background: #fff;
  border: 1px solid #b4b4b4;
  border-radius: 3px;
  display: flex;
  align-items: center;
  padding-left: 8px;
  font-size: 12px;
  letter-spacing: .3px;
  color: #777;
}

.search-ic {
  width: 14px;
  height: 14px;
  margin-right: 5px;
}

.lbl {
  flex: none;
  font-size: 10px;
  letter-spacing: 1px;
}

.lbl-coord { margin-left: 74px; }
.lbl-scale { margin-left: 11px; }
.lbl-mag { margin-left: 8px; }
.lbl-rot { margin-left: 8px; }
.lbl-render { margin-left: 4px; letter-spacing: -1px; }

.field {
  height: 21px;
  flex: none;
  background: #fff;
  border: 1px solid #b4b4b4;
  border-radius: 3px;
  display: flex;
  align-items: center;
  font-family: "Liberation Sans", sans-serif;
  font-size: 10px;
  letter-spacing: .1px;
  padding-left: 5px;
}

.f-coord {
  width: 75px;
  margin-left: 3px;
}

.mouse {
  width: 20px;
  height: 20px;
  margin-left: 1px;
  flex: none;
}

.f-scale {
  width: 79px;
  margin-left: 4px;
  padding-left: 3px;
}

.fval {
  flex: 1;
  min-width: 0;
  white-space: nowrap;
}

.dropbtn {
  width: 20px;
  height: 19px;
  flex: none;
  border-left: 1px solid #c4c4c4;
  display: flex;
  align-items: center;
  justify-content: center;
}

.lock {
  width: 14px;
  height: 16px;
  margin-left: 11px;
  flex: none;
}

.f-spin {
  padding-right: 0;
}

.f-mag {
  width: 83px;
  margin-left: 3px;
  padding-left: 3px;
}

.f-rot {
  width: 82px;
  margin-left: 10px;
}

.spin {
  width: 14px;
  height: 19px;
  flex: none;
  background: #f4f4f4;
  border-left: 1px solid #c4c4c4;
  display: flex;
  flex-direction: column;
  align-items: center;
  justify-content: center;
  gap: 2px;
}

.up {
  width: 0;
  height: 0;
  border-left: 4px solid transparent;
  border-right: 4px solid transparent;
  border-bottom: 5px solid #555;
}

.down {
  width: 0;
  height: 0;
  border-left: 4px solid transparent;
  border-right: 4px solid transparent;
  border-top: 5px solid #555;
}

.rcheck {
  width: 14px;
  height: 14px;
  margin-left: 8px;
  flex: none;
  background: #fff;
  border: 1px solid #555;
}

.rcheck svg {
  display: block;
}

.globe {
  width: 15px;
  height: 15px;
  margin-left: 16px;
  flex: none;
}

.epsg {
  margin-left: 2px;
  font-family: "Liberation Sans", sans-serif;
  font-size: 10px;
  color: #222;
}

.chat {
  width: 18px;
  height: 18px;
  margin-left: 22px;
  flex: none;
}

.grip {
  position: absolute;
  right: 0;
  bottom: 0;
  width: 11px;
  height: 11px;
  background: radial-gradient(circle, #b0b0b0 .7px, transparent .9px) 0 0 / 3px 3px;
}
```
